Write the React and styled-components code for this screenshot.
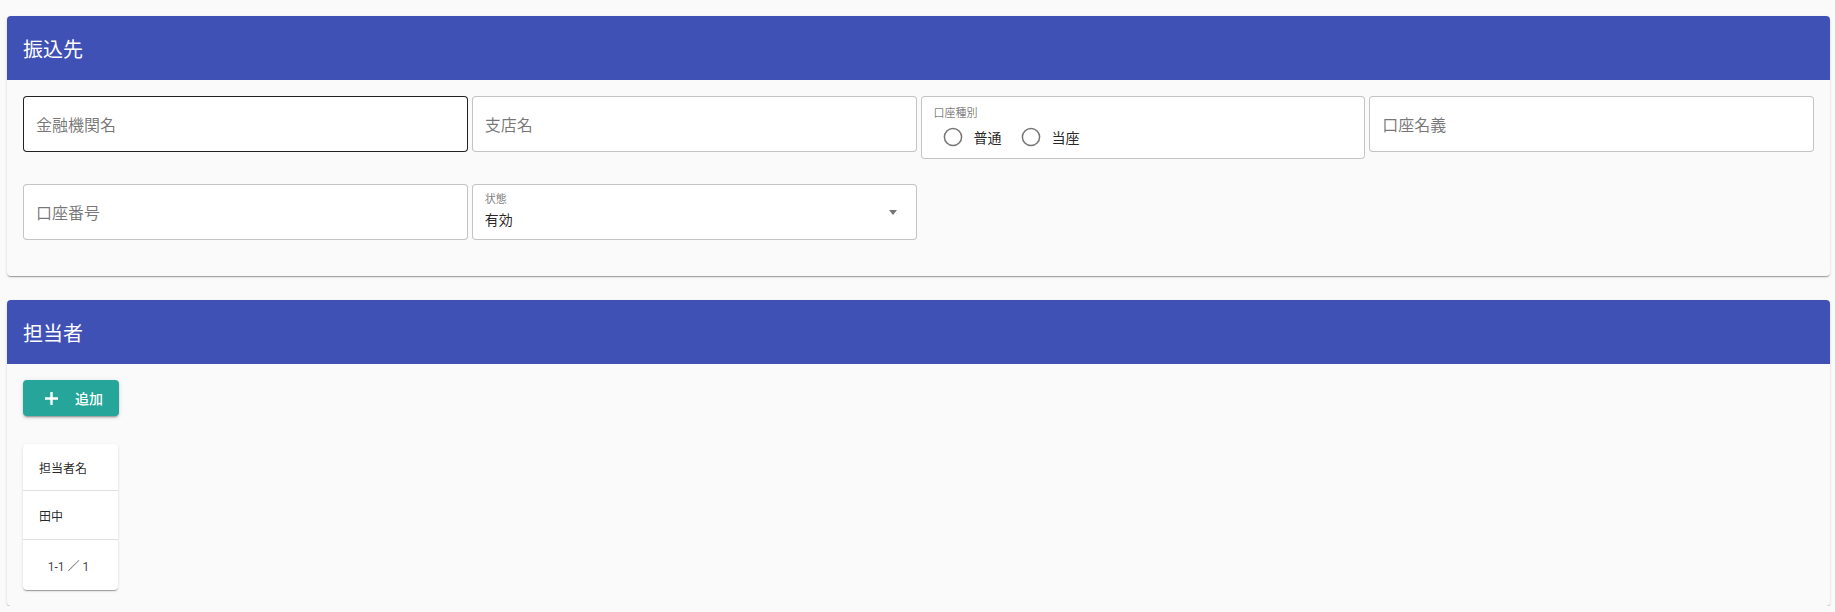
import React from "react";
import styled, { createGlobalStyle } from "styled-components";

const GlobalStyle = createGlobalStyle`
  html, body {
    margin: 0;
    padding: 0;
    background: #fafafa;
    font-family: Roboto, "Noto Sans CJK JP", "Noto Sans", sans-serif;
    color: rgba(0, 0, 0, 0.87);
  }
  * { box-sizing: border-box; }
`;

const Page = styled.div`
  display: flex;
  flex-direction: column;
  gap: 24px;
  padding: 16px 5px 0 7px;
`;

const Card = styled.section`
  background: #fafafa;
  border-radius: 4px;
  overflow: hidden;
  box-shadow: 0px 2px 1px -1px rgba(0, 0, 0, 0.2), 0px 1px 1px 0px rgba(0, 0, 0, 0.14),
    0px 1px 3px 0px rgba(0, 0, 0, 0.12);
`;

const CardHeader = styled.header`
  height: 64px;
  display: flex;
  align-items: center;
  padding: 0 16px;
  background: #3f51b5;
  color: #fff;
  font-size: 20px;
  font-weight: 400;
`;

const CardBody = styled.div`
  padding: ${(p) => p.$padding || "16px"};
`;

const FieldGrid = styled.div`
  display: grid;
  grid-template-columns: repeat(4, 1fr);
  column-gap: 4px;
  row-gap: 25px;
  align-items: start;
`;

const TextBox = styled.div`
  height: 56px;
  background: #fff;
  border: 1px solid ${(p) => (p.$active ? "rgba(0,0,0,0.87)" : "rgba(0,0,0,0.23)")};
  border-radius: 4px;
  display: flex;
  align-items: center;
  padding: 0 12px;
  font-size: 16px;
  color: rgba(0, 0, 0, 0.54);
`;

const RadioBox = styled.div`
  height: 63px;
  background: #fff;
  border: 1px solid rgba(0, 0, 0, 0.23);
  border-radius: 4px;
  padding: 10px 12px 0 12px;
  display: flex;
  flex-direction: column;
`;

const SmallLabel = styled.div`
  font-size: 11px;
  line-height: 14px;
  color: rgba(0, 0, 0, 0.54);
`;

const RadioRow = styled.div`
  display: flex;
  align-items: center;
  margin-top: 6px;
  padding-left: 9px;
  gap: 19px;
`;

const RadioOption = styled.label`
  display: flex;
  align-items: center;
  gap: 11px;
  font-size: 14px;
  color: rgba(0, 0, 0, 0.87);
`;

const SelectBox = styled.div`
  position: relative;
  height: 56px;
  background: #fff;
  border: 1px solid rgba(0, 0, 0, 0.23);
  border-radius: 4px;
  padding: 8px 12px 0 12px;
  display: flex;
  flex-direction: column;
`;

const SelectValue = styled.div`
  font-size: 14px;
  line-height: 20px;
  margin-top: 3px;
  color: rgba(0, 0, 0, 0.87);
`;

const DropArrow = styled.span`
  position: absolute;
  right: 19px;
  top: 25px;
  width: 0;
  height: 0;
  border-left: 4.5px solid transparent;
  border-right: 4.5px solid transparent;
  border-top: 5px solid rgba(0, 0, 0, 0.54);
`;

const AddButton = styled.button`
  width: 96px;
  height: 36px;
  border: none;
  border-radius: 4px;
  background: #26a69a;
  color: #fff;
  display: flex;
  align-items: center;
  gap: 16px;
  padding: 0 0 0 21px;
  font-family: inherit;
  font-size: 14px;
  font-weight: 500;
  box-shadow: 0px 3px 1px -2px rgba(0, 0, 0, 0.2), 0px 2px 2px 0px rgba(0, 0, 0, 0.14),
    0px 1px 5px 0px rgba(0, 0, 0, 0.12);
`;

const TableCard = styled.div`
  margin-top: 28px;
  width: 95px;
  background: #fff;
  border-radius: 4px;
  box-shadow: 0px 2px 1px -1px rgba(0, 0, 0, 0.2), 0px 1px 1px 0px rgba(0, 0, 0, 0.14),
    0px 1px 3px 0px rgba(0, 0, 0, 0.12);
`;

const TableRow = styled.div`
  height: ${(p) => p.$h}px;
  display: flex;
  align-items: center;
  justify-content: ${(p) => (p.$center ? "center" : "flex-start")};
  padding: ${(p) => (p.$center ? "0 4px 0 0" : "0 16px")};
  font-size: 12px;
  color: ${(p) => (p.$muted ? "rgba(0,0,0,0.75)" : "rgba(0,0,0,0.87)")};
  border-bottom: ${(p) => (p.$last ? "none" : "1px solid #e0e0e0")};
`;

const RadioIcon = () => (
  <svg width="20" height="20" viewBox="0 0 20 20">
    <circle cx="10" cy="10" r="8.6" fill="none" stroke="rgba(0,0,0,0.54)" strokeWidth="1.5" />
  </svg>
);

const PlusIcon = () => (
  <svg width="15" height="15" viewBox="0 0 15 15">
    <path d="M7.5 1v13M1 7.5h13" stroke="#fff" strokeWidth="2.4" />
  </svg>
);

export default function App() {
  return (
    <>
      <GlobalStyle />
      <Page>
        <Card>
          <CardHeader>振込先</CardHeader>
          <CardBody $padding="16px 16px 36px">
            <FieldGrid>
              <TextBox $active>金融機関名</TextBox>
              <TextBox>支店名</TextBox>
              <RadioBox>
                <SmallLabel>口座種別</SmallLabel>
                <RadioRow>
                  <RadioOption>
                    <RadioIcon />
                    普通
                  </RadioOption>
                  <RadioOption>
                    <RadioIcon />
                    当座
                  </RadioOption>
                </RadioRow>
              </RadioBox>
              <TextBox>口座名義</TextBox>
              <TextBox>口座番号</TextBox>
              <SelectBox>
                <SmallLabel>状態</SmallLabel>
                <SelectValue>有効</SelectValue>
                <DropArrow />
              </SelectBox>
            </FieldGrid>
          </CardBody>
        </Card>
        <Card>
          <CardHeader>担当者</CardHeader>
          <CardBody>
            <AddButton>
              <PlusIcon />
              追加
            </AddButton>
            <TableCard>
              <TableRow $h={47}>担当者名</TableRow>
              <TableRow $h={49}>田中</TableRow>
              <TableRow $h={50} $center $muted $last>
                1-1 ／ 1
              </TableRow>
            </TableCard>
          </CardBody>
        </Card>
      </Page>
    </>
  );
}
